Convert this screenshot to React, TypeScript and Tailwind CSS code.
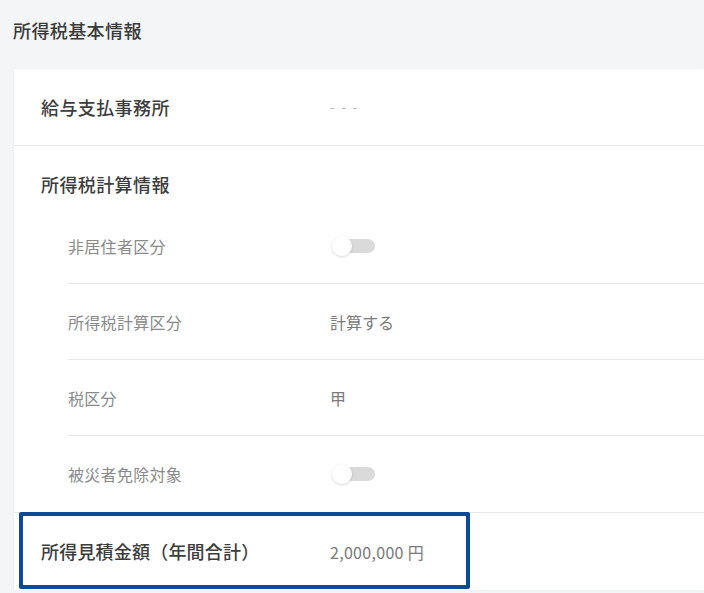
const font = { fontFamily: '"Noto Sans CJK JP", "Noto Sans", sans-serif' };

function Toggle() {
    return (
        <div className="relative ml-[2px] h-[20px] w-[44px]">
            <div className="absolute left-[8px] top-[3px] h-[14px] w-[35px] rounded-full bg-[#dadada]" />
            <div className="absolute left-0 top-0 h-[20px] w-[20px] rounded-full bg-white shadow-[0_1px_3px_rgba(0,0,0,0.16)]" />
        </div>
    );
}

function SubRow({ label, children, last }: { label: string; children: React.ReactNode; last?: boolean }) {
    return (
        <div className={`flex h-[76px] items-center ${last ? "" : "border-b border-[#e8e8e8]"}`}>
            <div className="w-[262px] text-[16px] tracking-[0.3px] text-[#8a8a8a]">{label}</div>
            <div className="text-[16px] text-[#7a7a7a]">{children}</div>
        </div>
    );
}

export default function App() {
    return (
        <div className="h-[593px] w-[704px] overflow-hidden bg-[#f4f5f6]" style={font}>
            <div className="flex h-[69px] items-start pl-[13px] pt-[19px]">
                <h2 className="text-[18px] leading-[22px] font-medium tracking-[0.4px] text-[#3a3a3a]">
                    所得税基本情報
                </h2>
            </div>
            <div className="ml-[14px] bg-white shadow-[0_0_2px_rgba(0,0,0,0.06)]">
                <div className="flex h-[77px] items-center border-b border-[#e8e8e8] pl-[27px]">
                    <div className="w-[289px] text-[18px] font-medium tracking-[0.4px] text-[#3d3d3d]">給与支払事務所</div>
                    <div className="text-[13px] tracking-[2px] text-[#b5b5b5]">- - -</div>
                </div>
                <div className="border-b border-[#e8e8e8]">
                    <div className="pl-[27px] pt-[27px] pb-[13px] text-[18px] leading-[22px] font-medium tracking-[0.4px] text-[#3d3d3d]">
                        所得税計算情報
                    </div>
                    <div className="ml-[54px]">
                        <SubRow label="非居住者区分">
                            <Toggle />
                        </SubRow>
                        <SubRow label="所得税計算区分">計算する</SubRow>
                        <SubRow label="税区分">甲</SubRow>
                        <SubRow label="被災者免除対象" last>
                            <Toggle />
                        </SubRow>
                    </div>
                </div>
                <div className="relative flex h-[77px] items-center pl-[27px]">
                    <div className="w-[289px] text-[18px] font-medium tracking-[0.2px] text-[#3d3d3d]">所得見積金額（年間合計）</div>
                    <div className="text-[16px] tracking-[0.3px] text-[#7a7a7a]">2,000,000 円</div>
                    <span className="pointer-events-none absolute left-[5px] top-[-1px] h-[77px] w-[451px] rounded-[2px] border-[4px] border-[#0d4a95]" />
                </div>
            </div>
        </div>
    );
}
